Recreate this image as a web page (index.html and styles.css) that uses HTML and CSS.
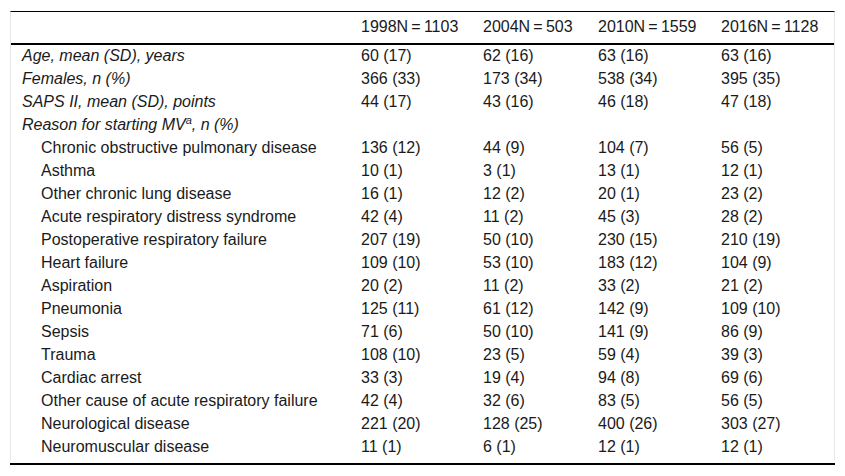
FILE: index.html
```html
<!DOCTYPE html>
<html lang="en">
<head>
<meta charset="utf-8">
<title>Table</title>
<link rel="stylesheet" href="styles.css">
</head>
<body>
<div class="frame">
  <table class="data">
    <colgroup>
      <col class="c1"><col class="c2"><col class="c3"><col class="c4"><col class="c5">
    </colgroup>
    <thead>
      <tr><th></th><th>1998N&#8201;=&#8201;1103</th><th>2004N&#8201;=&#8201;503</th><th>2010N&#8201;=&#8201;1559</th><th>2016N&#8201;=&#8201;1128</th></tr>
    </thead>
    <tbody>
      <tr><td class="lbl">Age, mean (SD), years</td><td>60 (17)</td><td>62 (16)</td><td>63 (16)</td><td>63 (16)</td></tr>
      <tr><td class="lbl">Females, n (%)</td><td>366 (33)</td><td>173 (34)</td><td>538 (34)</td><td>395 (35)</td></tr>
      <tr><td class="lbl">SAPS II, mean (SD), points</td><td>44 (17)</td><td>43 (16)</td><td>46 (18)</td><td>47 (18)</td></tr>
      <tr><td class="lbl">Reason for starting MV<sup class="sup">a</sup>, n (%)</td><td></td><td></td><td></td><td></td></tr>
      <tr><td class="sub">Chronic obstructive pulmonary disease</td><td>136 (12)</td><td>44 (9)</td><td>104 (7)</td><td>56 (5)</td></tr>
      <tr><td class="sub">Asthma</td><td>10 (1)</td><td>3 (1)</td><td>13 (1)</td><td>12 (1)</td></tr>
      <tr><td class="sub">Other chronic lung disease</td><td>16 (1)</td><td>12 (2)</td><td>20 (1)</td><td>23 (2)</td></tr>
      <tr><td class="sub">Acute respiratory distress syndrome</td><td>42 (4)</td><td>11 (2)</td><td>45 (3)</td><td>28 (2)</td></tr>
      <tr><td class="sub">Postoperative respiratory failure</td><td>207 (19)</td><td>50 (10)</td><td>230 (15)</td><td>210 (19)</td></tr>
      <tr><td class="sub">Heart failure</td><td>109 (10)</td><td>53 (10)</td><td>183 (12)</td><td>104 (9)</td></tr>
      <tr><td class="sub">Aspiration</td><td>20 (2)</td><td>11 (2)</td><td>33 (2)</td><td>21 (2)</td></tr>
      <tr><td class="sub">Pneumonia</td><td>125 (11)</td><td>61 (12)</td><td>142 (9)</td><td>109 (10)</td></tr>
      <tr><td class="sub">Sepsis</td><td>71 (6)</td><td>50 (10)</td><td>141 (9)</td><td>86 (9)</td></tr>
      <tr><td class="sub">Trauma</td><td>108 (10)</td><td>23 (5)</td><td>59 (4)</td><td>39 (3)</td></tr>
      <tr><td class="sub">Cardiac arrest</td><td>33 (3)</td><td>19 (4)</td><td>94 (8)</td><td>69 (6)</td></tr>
      <tr><td class="sub">Other cause of acute respiratory failure</td><td>42 (4)</td><td>32 (6)</td><td>83 (5)</td><td>56 (5)</td></tr>
      <tr><td class="sub">Neurological disease</td><td>221 (20)</td><td>128 (25)</td><td>400 (26)</td><td>303 (27)</td></tr>
      <tr><td class="sub">Neuromuscular disease</td><td>11 (1)</td><td>6 (1)</td><td>12 (1)</td><td>12 (1)</td></tr>
    </tbody>
  </table>
</div>
<div class="rule"></div>
</body>
</html>
```

FILE: styles.css
```css
html, body {
  margin: 0;
  padding: 0;
  background: #fff;
}
body {
  font-family: "Liberation Sans", Arial, Helvetica, sans-serif;
  font-size: 16px;
  color: #1a1a1a;
  padding-top: 11px;
}
.frame {
  margin-left: 10px;
  width: 823px;
  border-top: 1px solid #000;
  border-left: 1px solid #e6e6e6;
  border-right: 1px solid #e6e6e6;
  padding-bottom: 1px;
}
.data {
  border-collapse: collapse;
  width: 823px;
  table-layout: fixed;
}
.c1 { width: 340px; }
.c2 { width: 122px; }
.c3 { width: 115px; }
.c4 { width: 123px; }
.c5 { width: 123px; }
.data th {
  font-weight: normal;
  text-align: left;
  line-height: 16px;
  padding: 7px 0 8px 10px;
  border-bottom: 2px solid #000;
  white-space: nowrap;
}
.data td {
  line-height: 16px;
  height: 16px;
  padding: 3px 0 4px 10px;
  white-space: nowrap;
  vertical-align: top;
}
.data td.lbl {
  font-style: italic;
  padding-left: 11px;
}
.data td.sub {
  padding-left: 30px;
}
.sup {
  font-size: 11px;
  line-height: 0;
  vertical-align: 6px;
}
.rule {
  margin-left: 10px;
  margin-top: 3px;
  width: 825px;
  border-top: 2px solid #000;
}
```
